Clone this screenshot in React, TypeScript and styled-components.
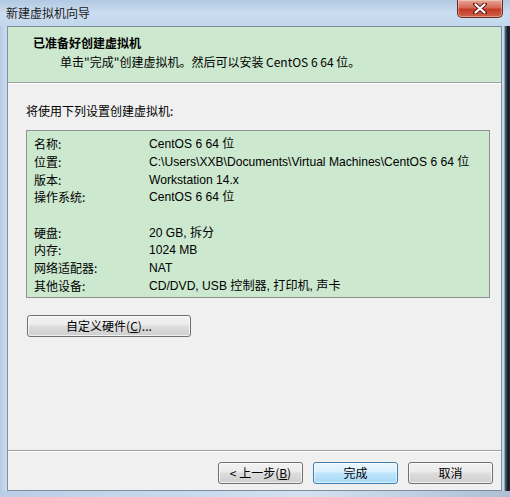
import React from "react";
import styled, { createGlobalStyle } from "styled-components";

const GlobalStyle = createGlobalStyle`
  html, body { margin: 0; padding: 0; background: #1c2a3a; }
  body { font-family: "Segoe UI", "Liberation Sans", "Noto Sans CJK SC", sans-serif; font-size: 12px; color: #000; }
`;

const Window = styled.div`
  width: 510px;
  height: 497px;
  box-sizing: border-box;
  display: flex;
  flex-direction: column;
  background: linear-gradient(180deg, #b9cfe6 0%, #c9dbee 40%, #bcd2ea 100%);
  overflow: hidden;
`;

const TitleBar = styled.div`
  height: 26px;
  flex: none;
  display: flex;
  align-items: flex-start;
  padding-left: 6px;
  background: linear-gradient(180deg, #b2c9e3 0%, #cadcef 50%, #c3d7ec 100%);
`;

const TitleText = styled.div`
  margin-top: 6px;
  font-size: 12px;
  line-height: 14px;
  color: #1a1a1a;
  font-family: "Noto Sans CJK SC", sans-serif;
`;

const CloseButton = styled.div`
  margin-left: auto;
  margin-right: 7px;
  width: 46px;
  height: 18px;
  box-sizing: border-box;
  border: 1px solid #6d2b26;
  border-top: none;
  border-radius: 0 0 5px 5px;
  background: linear-gradient(180deg, #e8a493 0%, #d46a55 45%, #c23b25 55%, #d0614a 100%);
  display: flex;
  align-items: center;
  justify-content: center;
  box-shadow: inset 0 0 0 1px rgba(255, 255, 255, 0.35);
`;

const FrameRow = styled.div`
  flex: 1;
  display: flex;
  min-height: 0;
`;

const LeftFrame = styled.div`
  width: 7px;
  flex: none;
  background: linear-gradient(90deg, #b4cbe4, #cddcee);
`;

const RightFrame = styled.div`
  width: 8px;
  flex: none;
  background: linear-gradient(90deg, #c9d9ec 0px, #c9d9ec 2px, #5a6b80 3px, #0d1520 6px, #202c3a 8px);
`;

const Client = styled.div`
  flex: 1;
  display: flex;
  flex-direction: column;
  background: #f0f0f0;
  border: 1px solid #7c8ea3;
  min-width: 0;
`;

const BottomFrame = styled.div`
  height: 6px;
  flex: none;
  background: linear-gradient(90deg, #b9cee6, #d3e1f0 60%, #aebfd3);
`;

const Header = styled.div`
  height: 56px;
  flex: none;
  box-sizing: border-box;
  background: #cce8cf;
  border-bottom: 1px solid #a0a0a0;
  box-shadow: 0 1px 0 #ffffff;
  padding: 7px 0 0 25px;
  font-family: "Noto Sans CJK SC", sans-serif;
`;

const HeaderTitle = styled.div`
  font-weight: bold;
  font-size: 12px;
  line-height: 18px;
`;

const HeaderSub = styled.div`
  margin-top: 1px;
  padding-left: 27px;
  font-size: 12px;
  line-height: 18px;
`;

const Body = styled.div`
  flex: 1;
  display: flex;
  flex-direction: column;
  padding: 19px 0 0 18px;
`;

const Label = styled.div`
  font-family: "Noto Sans CJK SC", sans-serif;
  line-height: 18px;
`;

const SummaryBox = styled.div`
  margin-top: 10px;
  width: 464px;
  height: 168px;
  box-sizing: border-box;
  border: 1px solid #8e8f8f;
  background: #cce8cf;
  padding: 4px 0 0 7px;
  display: flex;
  flex-direction: column;
`;

const Row = styled.div<{ $gapBefore?: boolean }>`
  display: grid;
  grid-template-columns: 115px 1fr;
  height: 17.8px;
  line-height: 18px;
  margin-top: ${(p) => (p.$gapBefore ? "17.4px" : "0")};
  font-family: "Segoe UI", "Liberation Sans", "Noto Sans CJK SC", sans-serif;
  font-size: 12.1px;
  white-space: nowrap;
`;

const Key = styled.span`
  font-family: "Noto Sans CJK SC", sans-serif;
  font-size: 12px;
`;

const Value = styled.span``;

const Button = styled.button<{ $default?: boolean; $w?: number }>`
  width: ${(p) => p.$w ?? 85}px;
  height: 22px;
  box-sizing: border-box;
  padding: 0;
  font-family: "Noto Sans CJK SC", sans-serif;
  font-size: 12px;
  color: #000;
  border-radius: 3px;
  border: 1px solid ${(p) => (p.$default ? "#3c7fb1" : "#707070")};
  background: ${(p) =>
    p.$default
      ? "linear-gradient(180deg, #eaf6fd 0%, #d9f0fc 45%, #bee6fd 50%, #a7d9f5 100%)"
      : "linear-gradient(180deg, #f2f2f2 0%, #ebebeb 45%, #dddddd 50%, #cfcfcf 100%)"};
  box-shadow: inset 0 0 0 1px ${(p) => (p.$default ? "rgba(255,255,255,0.6)" : "rgba(255,255,255,0.7)")};
  display: flex;
  align-items: center;
  justify-content: center;
  line-height: 18px;
`;

const CustomRow = styled.div`
  margin-top: 17px;
  margin-left: 1px;
`;

const Footer = styled.div`
  flex: none;
  height: 40px;
  box-sizing: border-box;
  border-top: 1px solid #a0a0a0;
  box-shadow: inset 0 1px 0 #ffffff;
  display: flex;
  justify-content: flex-end;
  align-items: flex-start;
  gap: 10px;
  padding: 11px 8px 0 0;
`;

const U = styled.span`
  text-decoration: underline;
`;

const rows1: [string, string][] = [
  ["名称:", "CentOS 6 64 位"],
  ["位置:", "C:\\Users\\XXB\\Documents\\Virtual Machines\\CentOS 6 64 位"],
  ["版本:", "Workstation 14.x"],
  ["操作系统:", "CentOS 6 64 位"],
];
const rows2: [string, string][] = [
  ["硬盘:", "20 GB, 拆分"],
  ["内存:", "1024 MB"],
  ["网络适配器:", "NAT"],
  ["其他设备:", "CD/DVD, USB 控制器, 打印机, 声卡"],
];

export default function App() {
  return (
    <>
      <GlobalStyle />
      <Window>
        <TitleBar>
          <TitleText>新建虚拟机向导</TitleText>
          <CloseButton>
            <svg width="14" height="11" viewBox="0 0 14 11">
              <path d="M2 1 L12 10 M12 1 L2 10" stroke="#5a1a12" strokeWidth="4" strokeLinecap="round" />
              <path d="M2.5 1.5 L11.5 9.5 M11.5 1.5 L2.5 9.5" stroke="#ffffff" strokeWidth="2.2" strokeLinecap="round" />
            </svg>
          </CloseButton>
        </TitleBar>
        <FrameRow>
          <LeftFrame />
          <Client>
            <Header>
              <HeaderTitle>已准备好创建虚拟机</HeaderTitle>
              <HeaderSub>单击"完成"创建虚拟机。然后可以安装 CentOS 6 64 位。</HeaderSub>
            </Header>
            <Body>
              <Label>将使用下列设置创建虚拟机:</Label>
              <SummaryBox>
                {rows1.map(([k, v]) => (
                  <Row key={k}>
                    <Key>{k}</Key>
                    <Value>{v}</Value>
                  </Row>
                ))}
                {rows2.map(([k, v], i) => (
                  <Row key={k} $gapBefore={i === 0}>
                    <Key>{k}</Key>
                    <Value>{v}</Value>
                  </Row>
                ))}
              </SummaryBox>
              <CustomRow>
                <Button $w={164}>
                  自定义硬件(<U>C</U>)...
                </Button>
              </CustomRow>
            </Body>
            <Footer>
              <Button>
                &lt; 上一步(<U>B</U>)
              </Button>
              <Button $default>完成</Button>
              <Button>取消</Button>
            </Footer>
          </Client>
          <RightFrame />
        </FrameRow>
        <BottomFrame />
      </Window>
    </>
  );
}
